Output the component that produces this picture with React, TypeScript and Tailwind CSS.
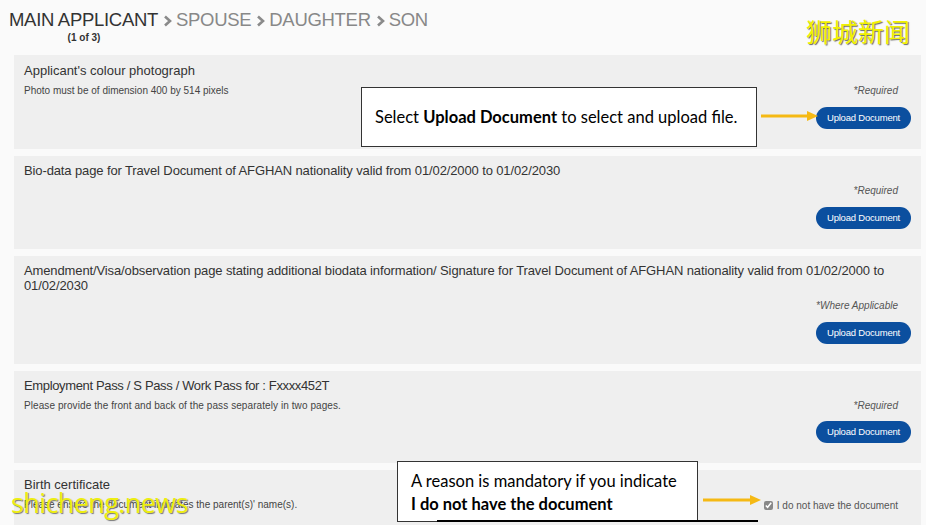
import React from "react";

const Btn = () => (
  <button className="w-[95px] h-[22px] rounded-full bg-[#0b4f9f] text-white text-[9.5px] leading-[22px] tracking-[-0.2px]">
    Upload Document
  </button>
);

const Req = ({ children }: { children: React.ReactNode }) => (
  <span className="italic text-[10px] leading-[14px] text-[#555] mr-[13px]">{children}</span>
);

const Chev = () => (
  <svg width="9" height="12" viewBox="0 0 9 12" className="ml-[5px] mr-[4px] mt-[2px]">
    <polyline points="2,1.5 7,6 2,10.5" fill="none" stroke="#8a8a8a" strokeWidth="2.6" />
  </svg>
);

const Arrow = ({ x, y, w }: { x: number; y: number; w: number }) => (
  <svg
    className="absolute"
    style={{ left: x, top: y - 6 }}
    width={w}
    height={12}
    viewBox={`0 0 ${w} 12`}
  >
    <line x1={0} y1={6} x2={w - 9} y2={6} stroke="#f5b914" strokeWidth={3} />
    <polygon points={`${w - 11},1 ${w},6 ${w - 11},11`} fill="#f5b914" />
  </svg>
);

export default function App() {
  return (
    <div
      className="relative w-full h-[525px] overflow-hidden bg-[#fafafa] text-[#333]"
      style={{ fontFamily: '"Liberation Sans", Arial, sans-serif' }}
    >
      {/* header */}
      <div className="pl-[9px] pt-[8px] h-[55px]">
        <div className="flex items-center text-[18.5px] leading-[24px] tracking-[-0.3px]">
          <span className="text-[#333]">MAIN APPLICANT</span>
          <Chev />
          <span className="text-[#888]">SPOUSE</span>
          <Chev />
          <span className="text-[#888]">DAUGHTER</span>
          <Chev />
          <span className="text-[#888]">SON</span>
        </div>
        <div className="w-[150px] text-center text-[10px] font-bold leading-[12px] text-[#333]">(1 of 3)</div>
      </div>

      {/* cards */}
      <div className="flex flex-col gap-[7px] pl-[14px] pr-[5px]">
        {/* card 1 */}
        <div className="bg-[#efefef] pl-[10px] pr-[10px] pt-[8px] pb-[20px]">
          <div className="text-[13px] leading-[16px]">Applicant's colour photograph</div>
          <div className="flex justify-between items-center mt-[5px] h-[14px]">
            <span className="text-[10px] leading-[14px] text-[#444]">Photo must be of dimension 400 by 514 pixels</span>
            <Req>*Required</Req>
          </div>
          <div className="flex justify-end mt-[9px]">
            <Btn />
          </div>
        </div>

        {/* card 2 */}
        <div className="bg-[#efefef] pl-[10px] pr-[10px] pt-[7px] pb-[20px]">
          <div className="text-[13px] leading-[16px] tracking-[-0.12px]">
            Bio-data page for Travel Document of AFGHAN nationality valid from 01/02/2000 to 01/02/2030
          </div>
          <div className="flex justify-end items-center mt-[5px] h-[14px]">
            <Req>*Required</Req>
          </div>
          <div className="flex justify-end mt-[9px]">
            <Btn />
          </div>
        </div>

        {/* card 3 */}
        <div className="bg-[#efefef] pl-[10px] pr-[10px] pt-[7px] pb-[20px]">
          <div className="text-[13px] leading-[15px] tracking-[-0.12px]">
            Amendment/Visa/observation page stating additional biodata information/ Signature for Travel Document of AFGHAN nationality valid from 01/02/2000 to
            <br />
            01/02/2030
          </div>
          <div className="flex justify-end items-center mt-[6px] h-[14px]">
            <Req>*Where Applicable</Req>
          </div>
          <div className="flex justify-end mt-[9px]">
            <Btn />
          </div>
        </div>

        {/* card 4 */}
        <div className="bg-[#efefef] pl-[10px] pr-[10px] pt-[7px] pb-[20px]">
          <div className="text-[13px] leading-[16px] tracking-[-0.35px]">Employment Pass / S Pass / Work Pass for : Fxxxx452T</div>
          <div className="flex justify-between items-center mt-[5px] h-[14px]">
            <span className="text-[10px] leading-[14px] text-[#444] tracking-[0.08px]">Please provide the front and back of the pass separately in two pages.</span>
            <Req>*Required</Req>
          </div>
          <div className="flex justify-end mt-[8px]">
            <Btn />
          </div>
        </div>

        {/* card 5 */}
        <div className="bg-[#efefef] pl-[10px] pr-[10px] pt-[7px] pb-[20px]">
          <div className="text-[13px] leading-[16px]">Birth certificate</div>
          <div className="flex justify-between items-center mt-[5px] h-[14px]">
            <span className="text-[10px] leading-[14px] text-[#444]">Please ensure the document indicates the parent(s)' name(s).</span>
            <label className="flex items-center gap-[4px] mr-[13px] text-[10px] text-[#555]">
              <input type="checkbox" defaultChecked className="w-[9px] h-[9px] m-0 accent-[#888]" />
              I do not have the document
            </label>
          </div>
        </div>
      </div>

      {/* callout 1 */}
      <div
        className="absolute left-[361px] top-[87px] w-[396px] h-[60px] bg-white border border-[#333] flex items-center pl-[13px] text-[16.5px] text-black"
        style={{ fontFamily: 'Lato, "Open Sans", sans-serif' }}
      >
        <span>
          Select <b>Upload Document</b> to select and upload file.
        </span>
      </div>
      <Arrow x={761} y={116} w={57} />

      {/* callout 2 */}
      <div
        className="absolute left-[397px] top-[461px] w-[301px] h-[61px] bg-white border border-[#333] pl-[13px] pt-[8px] text-[16.5px] leading-[23px] text-black"
        style={{ fontFamily: 'Lato, "Open Sans", sans-serif' }}
      >
        <div>A reason is mandatory if you indicate</div>
        <div className="font-bold">I do not have the document</div>
      </div>
      <div className="absolute left-[437px] top-[520px] w-[321px] h-[2px] bg-black" />
      <Arrow x={703} y={500} w={58} />

      {/* watermarks */}
      <div
        className="absolute left-[806px] top-[14px] text-[26px] leading-[34px] text-[#f2f200]"
        style={{ fontFamily: '"Noto Sans CJK SC", sans-serif', textShadow: "1px 1px 1px #666" }}
      >
        狮城新闻
      </div>
      <div
        className="absolute left-[11px] top-[486px] text-[27px] leading-[34px] text-[#eeee10] tracking-[-0.6px]"
        style={{ fontFamily: '"Open Sans", sans-serif', textShadow: "1px 1px 1px #777" }}
      >
        shicheng.news
      </div>
    </div>
  );
}
